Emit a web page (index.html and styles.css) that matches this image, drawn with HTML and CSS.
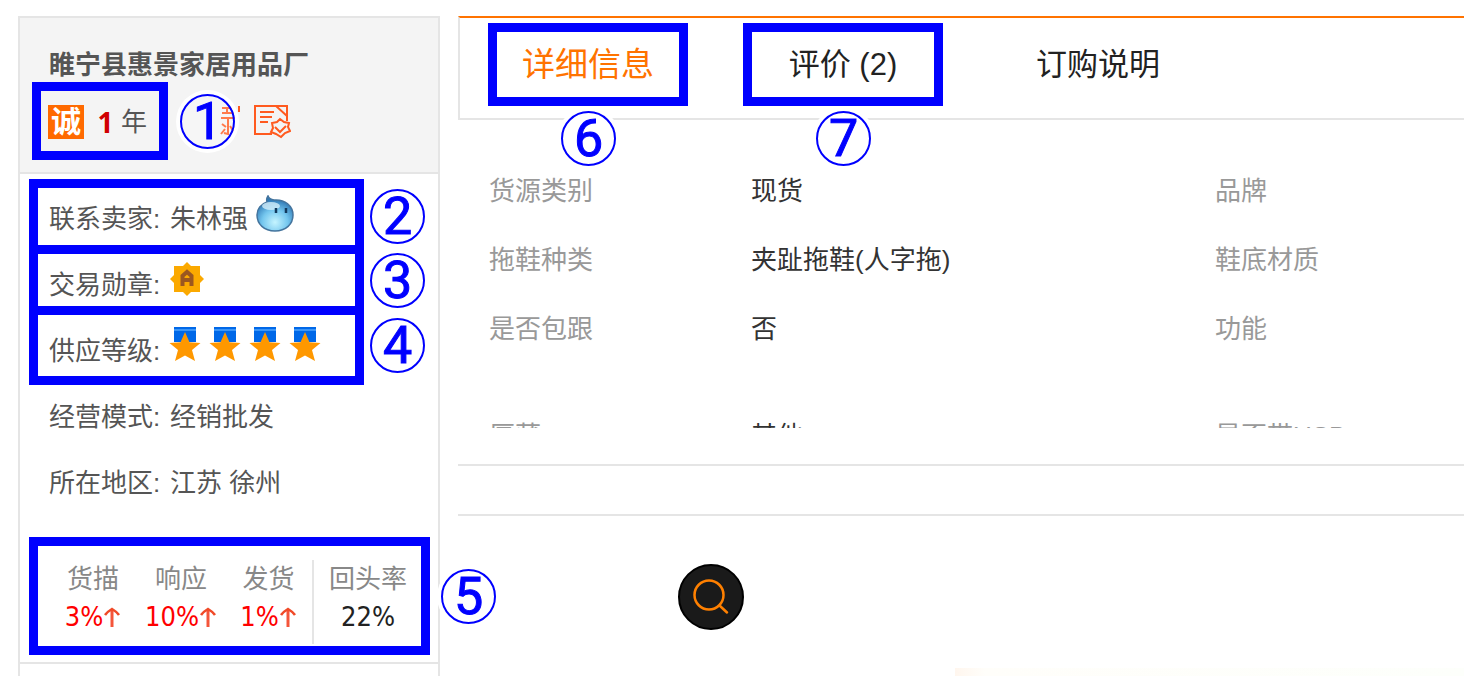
FILE: index.html
```
<!DOCTYPE html>
<html lang="zh-CN">
<head>
<meta charset="utf-8">
<title>睢宁县惠景家居用品厂</title>
<link rel="stylesheet" href="styles.css">
</head>
<body>
<svg class="defs" aria-hidden="true">
  <symbol id="medal" viewBox="0 0 32 36">
    <path d="M5 1h22v15H5z" fill="#0068e8"/>
    <path d="M5 3h22v2H5z" fill="#3a95f8"/>
    <path d="M16 6l4.500 10.200 11 .9-8.500 7 3 11L16 29.500 6 35.100l3-11L.5 17.100l11-.9z" fill="#ff9800"/>
  </symbol>
  <symbol id="up" viewBox="0 0 18 22">
    <path d="M9 21V3" fill="none" stroke="#f4553a" stroke-width="3"/>
    <path d="M2 9Q4 6 9 3Q14 6 16 9" fill="none" stroke="#f04a28" stroke-width="2.500"/>
  </symbol>
</svg>
<div class="page">
  <aside class="seller">
    <header class="seller-head">
      <h1 class="company">睢宁县惠景家居用品厂</h1>
      <div class="badges">
        <span class="years">
          <span class="cheng">诚</span><b class="year-count">1</b><span>年</span>
          <span class="mark mark-years"></span>
        </span>
        <span class="num num-1">1</span>
        <svg class="stamp" viewBox="0 0 26 36" aria-hidden="true">
          <path d="M5 4h12M5 9h12M10 4v5M4 14h14M11 14v16l-4-1M5 20l4 3M17 28l-4-6M4 30l4-5M22 2v6" fill="none" stroke="#ff5a1f" stroke-width="2"/>
        </svg>
        <svg class="cert" viewBox="0 0 38 36" aria-hidden="true">
          <g fill="none" stroke="#ff5a1f" stroke-width="2">
            <path d="M34 17V2H2v28h17M7 8h14M7 13h12M7 18h8M23 2l11 10"/>
            <path d="M27 15l4 3 5 1-1 4 2 4-5 2-4 4-5-3-5-2 2-4-1-5 5-1z"/>
            <path d="M22 23l5 5 6-6"/>
          </g>
        </svg>
      </div>
    </header>
    <dl class="facts">
      <div class="fact">
        <dt>联系卖家:</dt>
        <dd>朱林强
          <svg class="wangwang" viewBox="0 0 38 38" role="img" aria-label="旺旺">
            <defs><radialGradient id="drop" cx=".5" cy=".75" r=".65"><stop offset="0" stop-color="#c5f4ff"/><stop offset=".55" stop-color="#74c6ee"/><stop offset="1" stop-color="#2f78b5"/></radialGradient></defs>
            <path d="M12 1q1 3 6 4c11-1 19 6 19 15S30 36 19 36 1 29 1 20c0-6 4-11 10-13q-1-3 1-6z" fill="url(#drop)" stroke="#44749d" stroke-width="1.500"/>
            <ellipse cx="15" cy="11" rx="9" ry="4" fill="#dcf3fc" opacity=".75"/>
            <path d="M20 13v5M30 13v5" stroke="#123a5e" stroke-width="2.500"/>
          </svg>
        </dd>
        <span class="mark mark-contact"></span><span class="num num-2">2</span>
      </div>
      <div class="fact">
        <dt>交易勋章:</dt>
        <dd>
          <svg class="honor" viewBox="0 0 34 34" role="img" aria-label="A">
            <path d="M17 0l4 4h9v9l4 4-4 4v9h-9l-4 4-4-4H4v-9l-4-4 4-4V4h9z" fill="#fba900"/>
            <path d="M12.500 24V14l4.500-4 4.500 4v10M12 18h10" fill="none" stroke="#9b5720" stroke-width="4"/>
          </svg>
        </dd>
        <span class="mark mark-honor"></span><span class="num num-3">3</span>
      </div>
      <div class="fact">
        <dt>供应等级:</dt>
        <dd class="medals">
          <svg class="medal"><use href="#medal"/></svg>
          <svg class="medal"><use href="#medal"/></svg>
          <svg class="medal"><use href="#medal"/></svg>
          <svg class="medal"><use href="#medal"/></svg>
        </dd>
        <span class="mark mark-level"></span><span class="num num-4">4</span>
      </div>
      <div class="fact"><dt>经营模式:</dt><dd>经销批发</dd></div>
      <div class="fact"><dt>所在地区:</dt><dd>江苏 徐州</dd></div>
    </dl>
    <div class="stats">
      <div class="stat"><span>货描</span><span class="value rise">3%<svg class="up"><use href="#up"/></svg></span></div>
      <div class="stat"><span>响应</span><span class="value rise">10%<svg class="up"><use href="#up"/></svg></span></div>
      <div class="stat"><span>发货</span><span class="value rise">1%<svg class="up"><use href="#up"/></svg></span></div>
      <div class="stat stat-return"><span>回头率</span><span class="value">22%</span></div>
      <span class="mark mark-stats"></span><span class="num num-5">5</span>
    </div>
  </aside>
  <main class="detail">
    <nav class="tabs">
      <button class="tab active" type="button">详细信息<span class="mark mark-tab"></span><span class="num num-tab">6</span></button>
      <button class="tab" type="button">评价 (2)<span class="mark mark-tab"></span><span class="num num-tab">7</span></button>
      <button class="tab" type="button">订购说明</button>
    </nav>
    <section class="attributes">
      <div class="clip">
        <table class="attr-table">
          <colgroup><col class="col-name"><col><col class="col-last"></colgroup>
          <tbody>
            <tr><th scope="row">货源类别</th><td>现货</td><th>品牌</th></tr>
            <tr><th scope="row">拖鞋种类</th><td>夹趾拖鞋(人字拖)</td><th>鞋底材质</th></tr>
            <tr><th scope="row">是否包跟</th><td>否</td><th>功能</th></tr>
            <tr class="late"><th scope="row">厚薄</th><td>其他</td><th>是否带USB</th></tr>
          </tbody>
        </table>
      </div>
    </section>
    <div class="spacer"></div>
    <button class="search" type="button" aria-label="搜索">
      <svg class="search-icon" viewBox="0 0 36 36" aria-hidden="true">
        <circle cx="16" cy="16" r="14.500"/><path d="M26.500 26.500l7.500 7"/>
      </svg>
    </button>
    <div class="banner"></div>
  </main>
</div>
</body>
</html>
```
FILE: styles.css
```
* { box-sizing: border-box; }
body {
  margin: 0;
  background: #fff;
  color: #555;
  font-family: "Liberation Sans", "Noto Sans CJK SC", sans-serif;
  font-size: 26px;
  line-height: 38px;
}
.defs { position: absolute; width: 0; height: 0; }
.page {
  display: flex;
  gap: 18px;
  height: 100vh;
  padding: 16px 0 0 18px;
  overflow: hidden;
}

/* callouts */
.mark {
  position: absolute;
  border: 9px solid #00f;
  pointer-events: none;
}
.num {
  position: absolute;
  z-index: 2;
  width: 55px;
  height: 55px;
  border: 2px solid #00f;
  border-radius: 50%;
  background: #fff;
  box-shadow: 0 0 0 4px #fff;
  color: #00f;
  font-family: Roboto, sans-serif;
  font-size: 52px;
  line-height: 52px;
  text-align: center;
  -webkit-text-stroke: 1px #00f;
}

/* seller card */
.seller {
  flex: 0 0 422px;
  border: 2px solid #e5e5e5;
  border-bottom: 0;
}
.seller-head {
  height: 156px;
  padding: 28px 29px 0;
  background: #f4f4f4;
  border-bottom: 2px solid #e5e5e5;
}
.company { margin: 0; font-size: 26px; line-height: 38px; }
.badges {
  position: relative;
  display: flex;
  align-items: center;
  height: 36px;
  margin: 20px 0 0 -1px;
}
.years { position: relative; display: flex; align-items: center; }
.cheng {
  width: 36px;
  height: 34px;
  background: #ff6a00;
  color: #fff;
  font-size: 30px;
  font-weight: bold;
  line-height: 34px;
  text-align: center;
}
.year-count {
  width: 37px;
  padding-left: 6px;
  color: #d00000;
  font-family: "Noto Sans", sans-serif;
  font-size: 28px;
  line-height: 34px;
  text-align: center;
}
.mark-years { inset: -21px -21px -19px -16px; }
.num-1 { left: 132px; top: -10px; background: rgba(255, 255, 255, .2); }
.stamp { width: 26px; height: 36px; margin-left: 70px; }
.cert { width: 38px; height: 36px; margin-left: 10px; }

.facts { margin: 11px 0 0; }
.fact {
  position: relative;
  display: grid;
  grid-template-columns: 121px 1fr;
  align-items: center;
  height: 66px;
  padding-top: 2px;
  padding-left: 29px;
}
.fact dd { margin: 0; display: flex; align-items: center; }
.wangwang { width: 38px; height: 38px; margin: 0 0 10px 8px; }
.honor { width: 34px; height: 34px; margin-bottom: 12px; }
.fact .medals { gap: 8px; margin-left: -1px; }
.medal { width: 32px; height: 36px; margin-bottom: 15px; }
.mark-contact { inset: -6px 74px -3px 9px; }
.mark-honor { inset: -6px 74px 2px 9px; }
.mark-level { inset: -11px 74px -2px 9px; }
.num-2, .num-3, .num-4 { right: 13px; box-shadow: none; }
.num-2 { top: 4px; }
.num-3 { top: 2px; }
.num-4 { top: 1px; }

.stats {
  position: relative;
  display: grid;
  grid-template-columns: 88px 88px 87px 1fr;
  margin-top: 45px;
  padding-left: 29px;
  padding-right: 16px;
}
.stats::after {
  content: "";
  position: absolute;
  inset: auto 0 -20px;
  border-bottom: 2px solid #e5e5e5;
}
.stat {
  display: flex;
  flex-direction: column;
  align-items: center;
  height: 84px;
  color: #888;
}
.stat-return { border-left: 2px solid #e5e5e5; }
.value {
  display: flex;
  align-items: center;
  color: #222;
  font-family: "DejaVu Sans Condensed", "DejaVu Sans", sans-serif;
  font-size: 27px;
}
.rise { color: #f00; }
.up { width: 18px; height: 22px; }
.mark-stats { inset: -23px 8px -11px 9px; }
.num-5 { right: -58px; top: 9px; }

/* product detail */
.detail { flex: 1; min-width: 0; display: flex; flex-direction: column; }
.tabs {
  display: flex;
  gap: 55px;
  padding: 5px 0 12px 28px;
  border-top: 2px solid #ff7300;
  border-left: 2px solid #e5e5e5;
  border-bottom: 2px solid #e5e5e5;
}
.tab {
  position: relative;
  min-width: 200px;
  height: 83px;
  padding: 0;
  border: 0;
  background: none;
  color: #222;
  font: inherit;
  font-size: 31px;
}
.active { color: #ff7300; font-size: 33px; }
.mark-tab { inset: 0; }
.num-tab { left: 73px; top: 88px; }
.attributes { padding-bottom: 36px; border-bottom: 2px solid #e5e5e5; }
.clip { height: 308px; padding-top: 36px; overflow: hidden; }
.attr-table { width: 100%; border-collapse: collapse; table-layout: fixed; }
.attr-table th, .attr-table td {
  height: 69px;
  padding: 0;
  text-align: left;
  font-weight: normal;
}
.attr-table th { color: #999; }
.attr-table th:first-child { padding-left: 31px; }
.attr-table td { color: #333; }
.attr-table .late th, .attr-table .late td { height: 145px; }
.col-name { width: 293px; }
.col-last { width: 249px; }
.spacer { height: 50px; border-bottom: 2px solid #e5e5e5; flex: none; }
.search {
  display: grid;
  place-items: center;
  flex: none;
  width: 66px;
  height: 66px;
  margin: 48px 0 0 220px;
  padding: 0;
  border: 2px solid #000;
  border-radius: 50%;
  background: #1a1a1a;
}
.search-icon { width: 36px; height: 36px; fill: none; stroke: #ff8000; stroke-width: 2.5; stroke-linecap: round; }
.banner {
  height: 8px;
  margin: auto 0 0 497px;
  background: linear-gradient(90deg, #fff6ee, #fffefa 30px, #fdfffb);
}
```
